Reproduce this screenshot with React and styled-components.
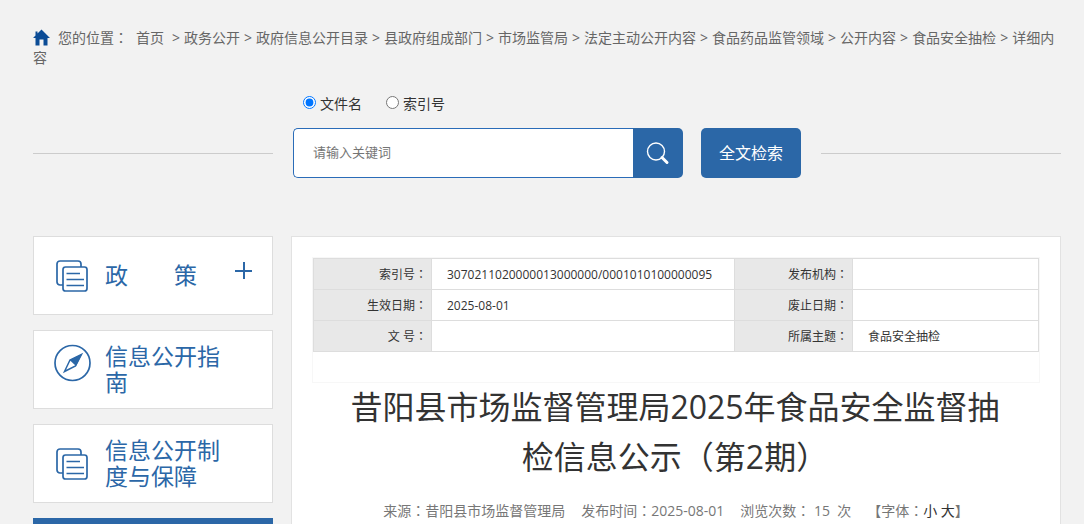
import React, { useState } from "react";
import styled, { createGlobalStyle } from "styled-components";

const GlobalStyle = createGlobalStyle`
  * {
    box-sizing: border-box;
  }

  body {
    margin: 0;
    background: #f2f2f2;
    color: #333;
    font-family: "Open Sans", "Noto Sans CJK SC", sans-serif;
    font-size: 14px;
  }

  a {
    color: inherit;
    text-decoration: none;
  }

  input, button {
    font-family: inherit;
  }
`;

const Page = styled.div`
  height: 100vh;
  overflow: hidden;
  padding: 27px 23px 0 33px;
`;

const Breadcrumb = styled.nav`
  color: #666;
  line-height: 20px;
`;

const HomeIcon = styled.svg`
  width: 17px;
  height: 17px;
  margin-right: 8px;
  vertical-align: -3px;
`;

const Place = styled.span`
  margin-right: 8px;
`;

const Separator = styled.span`
  margin-right: 4px;
  margin-left: ${({ $wide }) => ($wide ? "8px" : "4px")};
`;

// full-width punctuation centred in its box
const Punct = styled.span`
  font-family: "Noto Sans CJK TC", sans-serif;
`;

const SearchArea = styled.form`
  display: grid;
  grid-template-columns: 1fr auto 1fr;
  column-gap: 20px;
  margin-top: 24px;
`;

const Options = styled.div`
  grid-column: 2;
  display: flex;
  gap: 24px;
  height: 36px;
  padding: 0 10px;
`;

const Option = styled.label`
  display: flex;
  align-items: center;
  gap: 4px;
  height: 21px;

  input {
    width: 13px;
    height: 13px;
    margin: 0;
  }
`;

const Line = styled.div`
  align-self: center;
  height: 1px;
  background: #ccc;
`;

const SearchRow = styled.div`
  display: flex;
  height: 50px;
`;

const SearchInput = styled.input`
  width: 340px;
  padding: 0 19px 2px;
  border: 1px solid #2a6cb8;
  border-right: 0;
  border-radius: 5px 0 0 5px;
  background: #fff;
  font-size: 13px;
  outline: none;

  &::placeholder {
    color: #757575;
    opacity: 1;
  }
`;

const SearchButton = styled.button`
  display: flex;
  align-items: center;
  justify-content: center;
  width: 50px;
  padding: 0;
  border: 0;
  border-radius: 0 5px 5px 0;
  background: #2b67a7;
`;

const FullTextButton = styled.button`
  width: 100px;
  margin-left: 18px;
  padding: 0 0 2px;
  border: 0;
  border-radius: 5px;
  background: #2b67a7;
  color: #fff;
  font-size: 16px;
`;

const Columns = styled.div`
  display: flex;
  align-items: flex-start;
  gap: 18px;
  margin-top: 58px;
`;

const Sidebar = styled.aside`
  display: flex;
  flex-direction: column;
  flex: none;
  gap: 15px;
  width: 240px;
`;

const MenuCard = styled.a`
  display: flex;
  height: 79px;
  padding: 0 20px;
  border: 1px solid ${({ $active }) => ($active ? "#2b67a7" : "#ddd")};
  background: ${({ $active }) => ($active ? "#2b67a7" : "#fff")};
  color: #2b67a7;
`;

const MenuIcon = styled.svg`
  flex: none;
  align-self: ${({ $top }) => ($top ? "flex-start" : "center")};
  width: 38px;
  height: 38px;
  margin-top: ${({ $top }) => ($top ? "13px" : "0")};
`;

const MenuText = styled.span`
  align-self: center;
  width: 116px;
  margin-left: 13px;
  padding-bottom: 2px;
  font-size: 23px;
  line-height: 26px;
  white-space: pre-wrap;
`;

const PlusIcon = styled.svg`
  width: 17px;
  height: 17px;
  margin-top: 25px;
  margin-left: auto;
`;

const Main = styled.main`
  flex: 1;
  min-width: 0;
  height: 400px;
  padding: 20px;
  border: 1px solid #e2e2e2;
  background: #fff;
`;

const InfoBox = styled.div`
  height: 126px;
  border: 1px solid #f7f7f7;
`;

const InfoTable = styled.table`
  width: 100%;
  border-collapse: collapse;
  table-layout: fixed;
  font-size: 12px;
`;

const InfoLabel = styled.th`
  width: ${({ $width }) => $width};
  height: 31px;
  padding: 0 4px 0 0;
  border: 1px solid #ddd;
  background: #e8e8e8;
  font-weight: normal;
  text-align: right;
`;

const InfoValue = styled.td`
  width: ${({ $width }) => $width};
  padding: 0 15px;
  border: 1px solid #ddd;
  white-space: nowrap;
`;

const Title = styled.h1`
  margin: 0;
  padding: 0 31px 0 29px;
  font-size: 32px;
  font-weight: normal;
  line-height: 48px;
  text-align: center;
`;

const Meta = styled.div`
  display: flex;
  justify-content: center;
  gap: 16px;
  margin-top: 19px;
  color: #777;
  line-height: 20px;
  white-space: pre;
`;

const SizeLink = styled.a`
  color: #333;
`;

const crumbs = [
  "首页",
  "政务公开",
  "政府信息公开目录",
  "县政府组成部门",
  "市场监管局",
  "法定主动公开内容",
  "食品药品监管领域",
  "公开内容",
  "食品安全抽检",
  "详细内容",
];

const rows = [
  ["索引号", "3070211020000013000000/0001010100000095", "发布机构", ""],
  ["生效日期", "2025-08-01", "废止日期", ""],
  ["文 号", "", "所属主题", "食品安全抽检"],
];

const DocumentIcon = () => (
  <MenuIcon viewBox="0 0 38 38" fill="none" stroke="#2b67a7" strokeWidth="1.7" aria-hidden="true">
    <path d="M9 28H6a3 3 0 0 1-3-3V7a3 3 0 0 1 3-3h18a3 3 0 0 1 3 3v3" />
    <rect x="9" y="10" width="24" height="24" rx="2.5" />
    <path d="M12.5 16.5H26M12.5 22.5H30M12.5 28.5H30" />
  </MenuIcon>
);

const CompassIcon = () => (
  <MenuIcon $top viewBox="0 0 38 38" aria-hidden="true">
    <circle cx="18.5" cy="19" r="17.5" fill="none" stroke="#2b67a7" strokeWidth="1.7" />
    <path d="M27.5 10.5L21.5 22L10.5 27.5L16 16Z" fill="none" stroke="#2b67a7" strokeWidth="1.5" />
    <path d="M28 10L15.5 16L22 22Z" fill="#2b67a7" />
  </MenuIcon>
);

const App = () => {
  const [type, setType] = useState("name");

  return (
    <Page>
      <GlobalStyle />

      <Breadcrumb>
        <HomeIcon viewBox="0 0 17 17" aria-hidden="true">
          <path d="M8.5 0.5L17 9H14.5V16.5H10.5V10.5H6.5V16.5H2.5V9H0L2.5 6.5V2.5H4.5V4.5Z" fill="#0b4c96" />
        </HomeIcon>
        <Place>您的位置<Punct>：</Punct></Place>
        {crumbs.map((crumb, index) => (
          <React.Fragment key={crumb}>
            {index > 0 && <Separator $wide={index === 1}>&gt;</Separator>}
            <a href="#">{crumb}</a>
          </React.Fragment>
        ))}
      </Breadcrumb>

      <SearchArea onSubmit={(e) => e.preventDefault()}>
        <Options>
          <Option>
            <input type="radio" name="type" checked={type === "name"} onChange={() => setType("name")} />
            文件名
          </Option>
          <Option>
            <input type="radio" name="type" checked={type === "index"} onChange={() => setType("index")} />
            索引号
          </Option>
        </Options>
        <Line style={{ gridColumn: 1 }} />
        <SearchRow>
          <SearchInput type="text" placeholder="请输入关键词" aria-label="请输入关键词" />
          <SearchButton type="submit" aria-label="搜索">
            <svg width="24" height="24" viewBox="0 0 24 24" fill="none" stroke="#fff" aria-hidden="true">
              <circle cx="10" cy="10.5" r="8.5" strokeWidth="1.4" />
              <path d="M16 16.5L21 21.5" strokeWidth="3" strokeLinecap="round" />
            </svg>
          </SearchButton>
          <FullTextButton type="button">全文检索</FullTextButton>
        </SearchRow>
        <Line />
      </SearchArea>

      <Columns>
        <Sidebar>
          <MenuCard href="#">
            <DocumentIcon />
            <MenuText>政　　策</MenuText>
            <PlusIcon viewBox="0 0 17 17" aria-hidden="true">
              <path d="M0 9H17M9 0V17" stroke="#2b67a7" strokeWidth="2" />
            </PlusIcon>
          </MenuCard>
          <MenuCard href="#">
            <CompassIcon />
            <MenuText>信息公开指南</MenuText>
          </MenuCard>
          <MenuCard href="#">
            <DocumentIcon />
            <MenuText>信息公开制度与保障</MenuText>
          </MenuCard>
          <MenuCard as="div" $active />
        </Sidebar>

        <Main>
          <InfoBox>
            <InfoTable>
              <tbody>
                {rows.map(([label, value, label2, value2]) => (
                  <tr key={label}>
                    <InfoLabel scope="row" $width="118px">{label}<Punct>：</Punct></InfoLabel>
                    <InfoValue>{value}</InfoValue>
                    <InfoLabel scope="row" $width="118px">{label2}<Punct>：</Punct></InfoLabel>
                    <InfoValue $width="186px">{value2}</InfoValue>
                  </tr>
                ))}
              </tbody>
            </InfoTable>
          </InfoBox>

          <Title>
            昔阳县市场监督管理局2025年食品安全监督抽检信息公示<Punct>（</Punct>第2期<Punct>）</Punct>
          </Title>

          <Meta>
            <span>来源<Punct>：</Punct>昔阳县市场监督管理局</span>
            <span>发布时间<Punct>：</Punct>2025-08-01</span>
            <span>浏览次数<Punct>：</Punct> 15  次</span>
            <span>
              【字体<Punct>：</Punct><SizeLink href="#">小</SizeLink> <SizeLink href="#">大</SizeLink>】
            </span>
          </Meta>
        </Main>
      </Columns>
    </Page>
  );
};

export default App;
